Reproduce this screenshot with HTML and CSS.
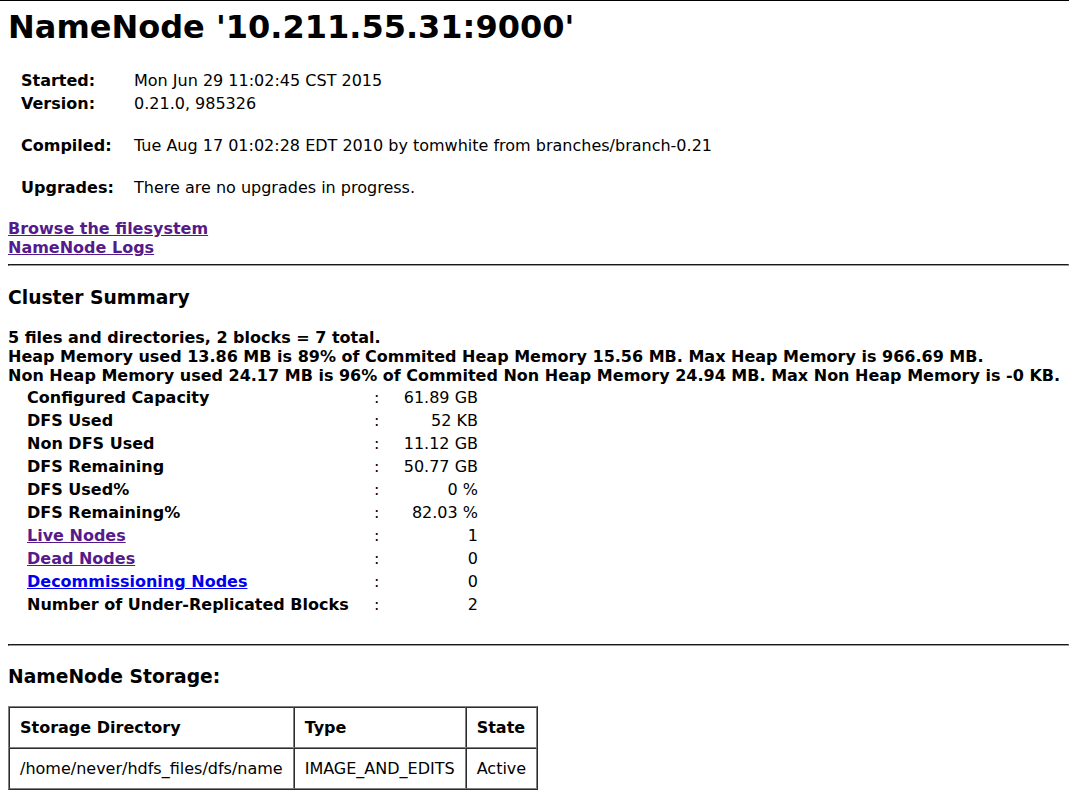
FILE: index.html
```html
<!DOCTYPE html>
<html>
<head>
<meta charset="utf-8">
<title>Hadoop NameNode 10.211.55.31:9000</title>
<link rel="stylesheet" href="styles.css">
</head>
<body>
<h1 class="title">NameNode '10.211.55.31:9000'</h1>

<table class="info">
  <tr><td class="label">Started:</td><td class="value">Mon Jun 29 11:02:45 CST 2015</td></tr>
  <tr><td class="label">Version:</td><td class="value">0.21.0, 985326</td></tr>
  <tr class="gap"><td></td><td></td></tr>
  <tr><td class="label">Compiled:</td><td class="value">Tue Aug 17 01:02:28 EDT 2010 by tomwhite from branches/branch-0.21</td></tr>
  <tr class="gap"><td></td><td></td></tr>
  <tr><td class="label">Upgrades:</td><td class="value">There are no upgrades in progress.</td></tr>
</table>

<div class="links">
  <div><a class="link visited" href="#">Browse the filesystem</a></div>
  <div><a class="link visited" href="#">NameNode Logs</a></div>
</div>

<hr class="rule rule-top">

<h3 class="section">Cluster Summary</h3>

<div class="summary">
  <div>5 files and directories, 2 blocks = 7 total.</div>
  <div>Heap Memory used 13.86 MB is 89% of Commited Heap Memory 15.56 MB. Max Heap Memory is 966.69 MB.</div>
  <div>Non Heap Memory used 24.17 MB is 96% of Commited Non Heap Memory 24.94 MB. Max Non Heap Memory is -0 KB.</div>
</div>

<table class="cluster">
  <tr><td class="c1">Configured Capacity</td><td class="c2">:</td><td class="c3">61.89 GB</td></tr>
  <tr><td class="c1">DFS Used</td><td class="c2">:</td><td class="c3">52 KB</td></tr>
  <tr><td class="c1">Non DFS Used</td><td class="c2">:</td><td class="c3">11.12 GB</td></tr>
  <tr><td class="c1">DFS Remaining</td><td class="c2">:</td><td class="c3">50.77 GB</td></tr>
  <tr><td class="c1">DFS Used%</td><td class="c2">:</td><td class="c3">0 %</td></tr>
  <tr><td class="c1">DFS Remaining%</td><td class="c2">:</td><td class="c3">82.03 %</td></tr>
  <tr><td class="c1"><a class="link visited" href="#">Live Nodes</a></td><td class="c2">:</td><td class="c3">1</td></tr>
  <tr><td class="c1"><a class="link visited" href="#">Dead Nodes</a></td><td class="c2">:</td><td class="c3">0</td></tr>
  <tr><td class="c1"><a class="link fresh" href="#">Decommissioning Nodes</a></td><td class="c2">:</td><td class="c3">0</td></tr>
  <tr><td class="c1">Number of Under-Replicated Blocks</td><td class="c2">:</td><td class="c3">2</td></tr>
</table>

<hr class="rule rule-bottom">

<h3 class="section section-storage">NameNode Storage:</h3>

<table class="storage" title="NameNode Storage">
  <thead>
    <tr><td class="head">Storage Directory</td><td class="head">Type</td><td class="head">State</td></tr>
  </thead>
  <tbody>
    <tr><td>/home/never/hdfs_files/dfs/name</td><td>IMAGE_AND_EDITS</td><td>Active</td></tr>
  </tbody>
</table>
</body>
</html>
```

FILE: styles.css
```css
html {
  border-top: 1px solid #000;
  background: #fff;
}

body {
  margin: 7px 0 0 8px;
  font-family: "DejaVu Sans", "Bitstream Vera Sans", sans-serif;
  font-size: 16px;
  color: #000;
  background: #fff;
}

.title {
  font-size: 32px;
  font-weight: bold;
  margin: 0;
  line-height: normal;
}

.info {
  margin: 23px 0 0 13px;
  border-collapse: collapse;
}

.info td {
  padding: 0;
  line-height: 23px;
  white-space: nowrap;
}

.info .label {
  width: 113px;
  font-weight: bold;
}

.info .gap td {
  height: 19px;
  line-height: 19px;
}

.links {
  margin-top: 20px;
  font-weight: bold;
}

.link {
  text-decoration: underline;
}

.link.visited {
  color: #551a8b;
}

.link.fresh {
  color: #0000ee;
}

.rule {
  height: 0;
  border: 1px inset #808080;
  border-color: #6e6e6e #9a9a9a #9a9a9a #6e6e6e;
  margin: 0;
}

.rule-top {
  margin-top: 7px;
}

.section {
  font-size: 18.72px;
  font-weight: bold;
  margin: 21px 0 20px 0;
  line-height: normal;
}

.summary {
  font-weight: bold;
  white-space: nowrap;
}

.cluster {
  margin: 1px 0 0 19px;
  border-collapse: collapse;
}

.cluster td {
  padding: 0;
  line-height: 23px;
  white-space: nowrap;
}

.cluster .c1 {
  width: 347px;
  font-weight: bold;
}

.cluster .c2 {
  width: 22px;
}

.cluster .c3 {
  width: 82px;
  text-align: right;
}

.rule-bottom {
  margin-top: 28px;
}

.section-storage {
  margin: 20px 0 19px 0;
}

.storage {
  border-collapse: separate;
  border-spacing: 0;
  border: 1px outset #808080;
}

.storage td {
  border: 1px inset #808080;
  padding: 10px;
  white-space: nowrap;
}

.storage .head {
  font-weight: bold;
}
```
